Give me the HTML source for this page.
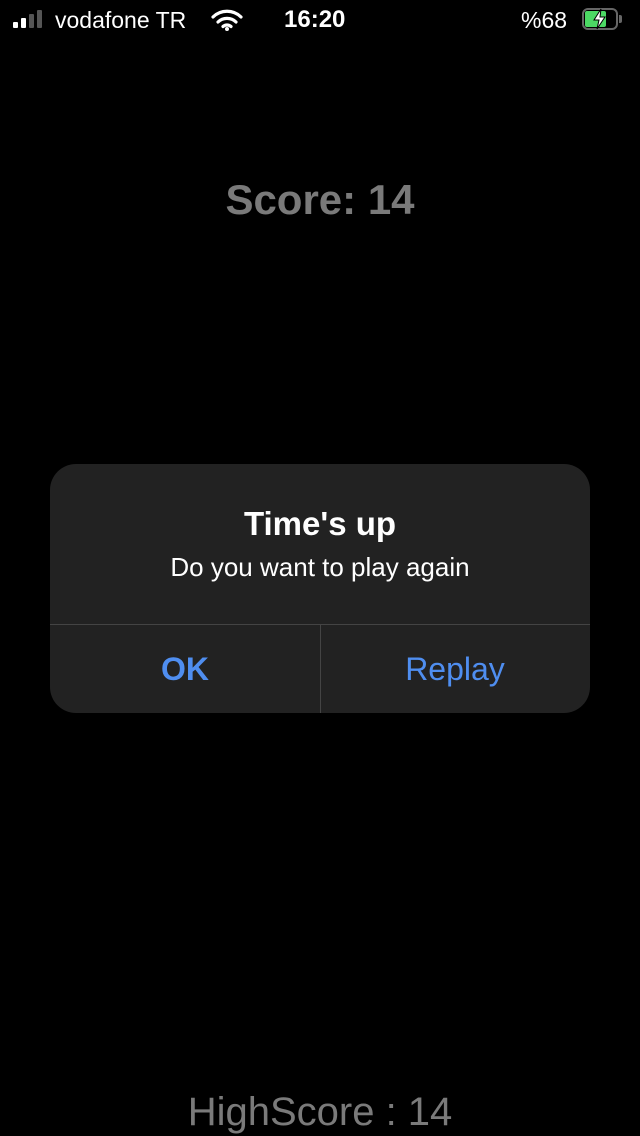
<!DOCTYPE html>
<html><head><meta charset="utf-8"><style>
body{margin:0;width:640px;height:1136px;background:#000;position:relative;overflow:hidden;font-family:"Liberation Sans",sans-serif;color:#fff}
.a{position:absolute}
</style></head><body>
<div class="a" style="left:13px;top:22px;width:5px;height:6px;background:#fff;border-radius:1px"></div>
<div class="a" style="left:21px;top:18px;width:5px;height:10px;background:#fff;border-radius:1px"></div>
<div class="a" style="left:29px;top:14px;width:5px;height:14px;background:#555;border-radius:1px"></div>
<div class="a" style="left:37px;top:10px;width:5px;height:18px;background:#555;border-radius:1px"></div>
<div class="a" style="left:55px;top:7px;font-size:23px">vodafone TR</div>
<svg class="a" style="left:211px;top:9px" width="32" height="22" viewBox="0 0 32 22"><path d="M2 8a20 20 0 0 1 28 0M7 13a13 13 0 0 1 18 0M12 17.5a6 6 0 0 1 8 0" stroke="#fff" stroke-width="3.2" fill="none" stroke-linecap="round"/><circle cx="16" cy="20" r="2" fill="#fff"/></svg>
<div class="a" style="left:284px;top:6px;font-size:24px;font-weight:bold">16:20</div>
<div class="a" style="left:521px;top:7px;font-size:23px">%68</div>
<div class="a" style="left:582px;top:8px;width:36px;height:22px;border:2px solid #666;border-radius:6px;box-sizing:border-box"></div>
<div class="a" style="left:585px;top:11px;width:21px;height:16px;background:#4cd964;border-radius:2px"></div>
<div class="a" style="left:619px;top:15px;width:3px;height:8px;background:#666;border-radius:0 2px 2px 0"></div>
<svg class="a" style="left:591px;top:8px" width="16" height="22" viewBox="0 0 16 22"><path d="M10 1L3 12h5l-2 9 8-12H9z" fill="#fff" stroke="#000" stroke-width="1"/></svg>
<div class="a" style="left:0;width:640px;top:176px;text-align:center;font-size:42px;font-weight:bold;color:#7a7a7a">Score: 14</div>
<div class="a" style="left:50px;top:464px;width:540px;height:249px;background:#222;border-radius:26px;overflow:hidden">
<div class="a" style="left:0;width:540px;top:41px;text-align:center;font-size:33px;font-weight:bold">Time's up</div>
<div class="a" style="left:0;width:540px;top:88px;text-align:center;font-size:26px">Do you want to play again</div>
<div class="a" style="left:0;top:160px;width:540px;height:1px;background:#444"></div>
<div class="a" style="left:270px;top:160px;width:1px;height:89px;background:#444"></div>
<div class="a" style="left:0;width:270px;top:187px;text-align:center;font-size:32px;font-weight:bold;color:#4f8ef0">OK</div>
<div class="a" style="left:270px;width:270px;top:187px;text-align:center;font-size:32px;color:#4f8ef0">Replay</div>
</div>
<div class="a" style="left:0;width:640px;top:1090px;text-align:center;font-size:40px;color:#7a7a7a">HighScore : 14</div>
</body></html>
